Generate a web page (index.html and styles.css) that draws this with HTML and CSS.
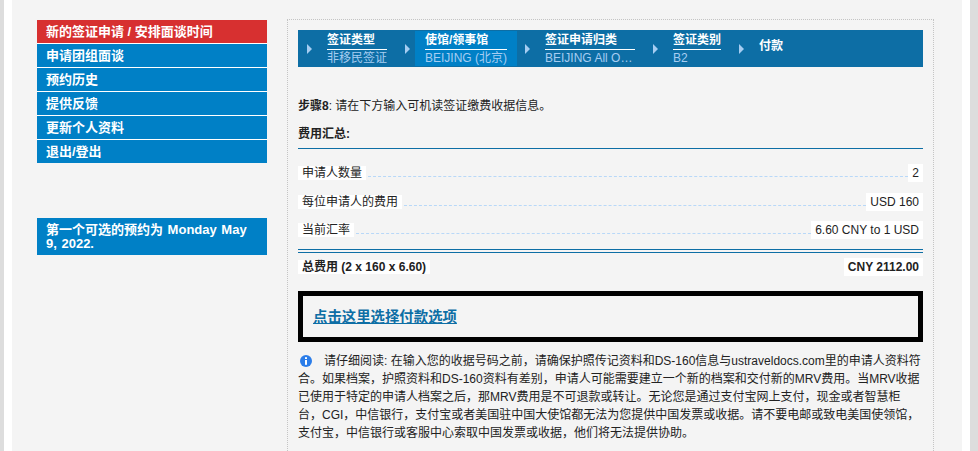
FILE: index.html
```html
<!DOCTYPE html>
<html lang="zh-CN">
<head>
<meta charset="utf-8">
<title>付款</title>
<link rel="stylesheet" href="styles.css">
</head>
<body>
<div class="page">
  <div class="inner">
    <aside class="side">
      <ul class="menu">
        <li class="menu-item active">新的签证申请 / 安排面谈时间</li>
        <li class="menu-item">申请团组面谈</li>
        <li class="menu-item">预约历史</li>
        <li class="menu-item">提供反馈</li>
        <li class="menu-item">更新个人资料</li>
        <li class="menu-item">退出/登出</li>
      </ul>
      <div class="notice">第一个可选的预约为 Monday May 9, 2022.</div>
    </aside>
    <main class="main">
      <nav class="steps">
        <div class="step">
          <span class="arrow"></span>
          <div class="step-body"><div class="step-title">签证类型</div><div class="step-value">非移民签证</div></div>
        </div>
        <div class="step">
          <span class="arrow"></span>
          <div class="step-body current"><div class="step-title">使馆/领事馆</div><div class="step-value">BEIJING (北京)</div></div>
        </div>
        <div class="step">
          <span class="arrow"></span>
          <div class="step-body"><div class="step-title">签证申请归类</div><div class="step-value wide">BEIJING All O…</div></div>
        </div>
        <div class="step">
          <span class="arrow"></span>
          <div class="step-body"><div class="step-title">签证类别</div><div class="step-value">B2</div></div>
        </div>
        <div class="step">
          <span class="arrow"></span>
          <div class="step-body"><div class="step-last">付款</div></div>
        </div>
      </nav>
      <p class="intro"><b>步骤8</b>: 请在下方输入可机读签证缴费收据信息。</p>
      <h2 class="summary-title">费用汇总:</h2>
      <div class="fees">
        <div class="fee"><span class="fee-label">申请人数量</span><span class="dots"></span><span class="fee-value">2</span></div>
        <div class="fee"><span class="fee-label">每位申请人的费用</span><span class="dots"></span><span class="fee-value">USD 160</span></div>
        <div class="fee"><span class="fee-label">当前汇率</span><span class="dots"></span><span class="fee-value">6.60 CNY to 1 USD</span></div>
      </div>
      <div class="fee total"><span class="fee-label">总费用 (2 x 160 x 6.60)</span><span class="spacer"></span><span class="fee-value">CNY 2112.00</span></div>
      <div class="pay-box"><a class="pay-link" href="#">点击这里选择付款选项</a></div>
      <p class="info"><svg class="info-icon" viewBox="0 0 12 12" width="12" height="12" aria-hidden="true"><circle cx="6" cy="6" r="6" fill="#2b7de9"/><rect x="5" y="2.2" width="2" height="1.8" fill="#fff"/><rect x="5" y="5" width="2" height="4.8" fill="#fff"/></svg>请仔细阅读: 在输入您的收据号码之前，请确保护照传记资料和DS-160信息与ustraveldocs.com里的申请人资料符合。如果档案，护照资料和DS-160资料有差别，申请人可能需要建立一个新的档案和交付新的MRV费用。当MRV收据已使用于特定的申请人档案之后，那MRV费用是不可退款或转让。无论您是通过支付宝网上支付，现金或者智慧柜台，CGI，中信银行，支付宝或者美国驻中国大使馆都无法为您提供中国发票或收据。请不要电邮或致电美国使领馆，支付宝，中信银行或客服中心索取中国发票或收据，他们将无法提供协助。</p>
    </main>
  </div>
</div>
</body>
</html>
```
FILE: styles.css
```css
* { box-sizing: border-box; }
html, body { height: 100%; margin: 0; overflow: hidden; }
body {
  background: #dddddd;
  padding: 0 8px 0 4px;
  font-family: "Liberation Sans", "Noto Sans CJK SC", sans-serif;
  font-size: 12px;
  line-height: 18px;
  color: #222222;
}
.page { height: 100%; overflow: hidden; background: #ffffff; padding: 0 8px; }
.inner {
  height: 100%;
  background: #f4f4f4;
  padding: 19px 28px 0 25px;
  display: flex;
  gap: 20px;
  align-items: flex-start;
}
.side { width: 230px; flex: none; padding-top: 1px; }
.menu { list-style: none; margin: 0; padding: 0; }
.menu-item {
  height: 24px;
  padding: 0 10px 0 9px;
  background: #0080c6;
  border-bottom: 1px solid #ffffff;
  color: #ffffff;
  font-size: 13px;
  font-weight: bold;
  line-height: 23px;
}
.menu-item:last-child { height: 23px; border-bottom: 0; }
.menu-item.active { background: #d73030; }
.notice {
  margin-top: 55px;
  padding: 5px 10px 4px 9px;
  background: #0080c6;
  color: #ffffff;
  font-size: 13px;
  font-weight: bold;
  line-height: 14px;
  word-spacing: 1px;
}
.main {
  flex: 1;
  min-width: 0;
  height: 432px;
  border: 1px dotted #c4c4c4;
  border-bottom: 0;
  padding: 10px 10px 0;
}
.steps {
  display: flex;
  height: 37px;
  padding: 1px 0 1px 9px;
  background: #0d6ea5;
  color: #ffffff;
}
.step { display: flex; align-items: center; margin-right: 8px; }
.arrow {
  width: 0;
  height: 0;
  margin-right: 5px;
  border-left: 5px solid #a6cdf2;
  border-top: 5px solid transparent;
  border-bottom: 5px solid transparent;
}
.step-body { height: 35px; padding: 0 10px; }
.step-body.current { background: #0080c6; }
.step-title {
  height: 19px;
  border-bottom: 1px solid #ffffff;
  font-weight: bold;
  line-height: 18px;
}
.step-value {
  color: #a6cdf2;
  line-height: 17px;
  white-space: nowrap;
}
.step-value.wide { width: 90px; }
.step-last { font-weight: bold; line-height: 31px; }
.intro { margin: 30px 0 10px; }
.summary-title {
  margin: 0 0 15px;
  padding-bottom: 5px;
  border-bottom: 1px solid #0d6ea5;
  font-size: 12px;
  line-height: 18px;
  font-weight: bold;
  height: 24px;
}
.fees { border-bottom: 4px double #0d6ea5; }
.fee { display: flex; align-items: center; height: 18px; margin-bottom: 10.5px; }
.fee-label { background: #ffffff; padding: 0 4px; line-height: 14px; }
.fee-value { background: #ffffff; padding: 0 4px; line-height: 18px; white-space: nowrap; }
.dots {
  flex: 1;
  align-self: flex-start;
  height: 13px;
  margin-left: 2px;
  border-bottom: 1px dashed #b8d8f8;
}
.spacer { flex: 1; }
.fees .fee:last-child { margin-bottom: 10px; }
.total { margin: 5px 0 15px; font-weight: bold; }
.pay-box {
  height: 51px;
  border: 5px solid #000000;
  padding: 0 10px;
  display: flex;
  align-items: center;
}
.pay-link {
  color: #0d6ea5;
  font-size: 14.4px;
  font-weight: bold;
  text-decoration: underline;
}
.info { margin: 10px 0 0; }
.info-icon { margin: 0 12px 0 2px; vertical-align: -2px; }
```
